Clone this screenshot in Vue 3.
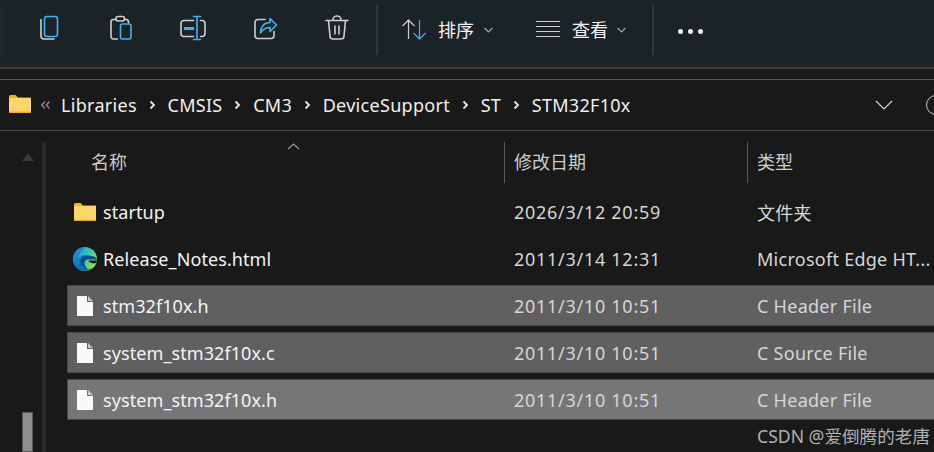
<script setup>
const crumbs = ['Libraries', 'CMSIS', 'CM3', 'DeviceSupport', 'ST', 'STM32F10x']

const rows = [
  { name: 'startup', date: '2026/3/12 20:59', type: '文件夹', icon: 'folder' },
  { name: 'Release_Notes.html', date: '2011/3/14 12:31', type: 'Microsoft Edge HT...', icon: 'edge' },
  { name: 'stm32f10x.h', date: '2011/3/10 10:51', type: 'C Header File', icon: 'file', state: 'selected' },
  { name: 'system_stm32f10x.c', date: '2011/3/10 10:51', type: 'C Source File', icon: 'file', state: 'selected' },
  { name: 'system_stm32f10x.h', date: '2011/3/10 10:51', type: 'C Header File', icon: 'file', state: 'hover' }
]
</script>

<template>
  <div class="window">
    <div class="toolbar">
      <div class="edge-block"></div>

      <button class="tool">
        <svg width="30" height="30" viewBox="0 0 30 30" fill="none">
          <path class="gray" d="M7 6.500V23a3 3 0 0 0 3 3h10" />
          <rect class="blue" x="10.500" y="3.500" width="13" height="20" rx="2.500" />
        </svg>
      </button>
      <button class="tool">
        <svg width="30" height="30" viewBox="0 0 30 30" fill="none">
          <path class="gray" d="M9.500 6.500H7.500a2.500 2.500 0 0 0-2.500 2.500v14.500a2.500 2.500 0 0 0 2.500 2.500h4M18.500 6.500h1.500a2.500 2.500 0 0 1 2.500 2.500v1" />
          <rect class="gray" x="10" y="3.500" width="8.500" height="4.500" rx="2" />
          <rect class="blue" x="14.500" y="11" width="10.500" height="15" rx="2" />
        </svg>
      </button>
      <button class="tool">
        <svg width="30" height="30" viewBox="0 0 30 30" fill="none">
          <path class="gray" d="M15.500 7.500H6a3 3 0 0 0-3 3v10a3 3 0 0 0 3 3h9.500M22.500 7.500H24a3 3 0 0 1 3 3v10a3 3 0 0 1-3 3h-1.500" />
          <path class="blue" d="M19 3.500v23M15.500 3.500h7M15.500 26.500h7" />
          <path class="blue thick" d="M6 15.500h10" />
        </svg>
      </button>
      <button class="tool">
        <svg width="30" height="30" viewBox="0 0 30 30" fill="none">
          <path class="gray" d="M15 6.500H8a3 3 0 0 0-3 3v13a3 3 0 0 0 3 3h13a3 3 0 0 0 3-3v-4" />
          <path class="blue" d="M20 5.500 26.500 12 20 18.500v-4c-4 0-7 1.500-9.500 5.500 0-6 3.500-10.500 9.500-10.500z" />
        </svg>
      </button>
      <button class="tool">
        <svg width="30" height="30" viewBox="0 0 30 30" fill="none">
          <path class="gray" d="M4 7.500h22M11 7a4 4 0 0 1 8 0M6.500 7.500 8 23a3 3 0 0 0 3 3h8a3 3 0 0 0 3-3l1.500-15.500M13 13v8M17 13v8" />
        </svg>
      </button>

      <div class="divider first"></div>

      <button class="menu sort">
        <svg width="26" height="24" viewBox="0 0 26 24" fill="none">
          <path class="gray thin" d="M7.500 2v19M1.500 8l6-6 6 6" />
          <path class="blue thin" d="M18.500 2v19M12.500 15l6 6 6-6" />
        </svg>
        <span class="menu-label">排序</span>
        <svg class="caret" width="9" height="6" viewBox="0 0 9 6" fill="none">
          <path d="M.5 1 4.500 5l4-4" />
        </svg>
      </button>
      <button class="menu view">
        <svg width="24" height="24" viewBox="0 0 24 24" fill="none">
          <path class="gray thin" d="M0 3.500h24M0 8.500h24M0 13.500h24M0 18.500h24" />
        </svg>
        <span class="menu-label">查看</span>
        <svg class="caret" width="9" height="6" viewBox="0 0 9 6" fill="none">
          <path d="M.5 1 4.500 5l4-4" />
        </svg>
      </button>

      <div class="divider"></div>

      <div class="dots"><i></i><i></i><i></i></div>
    </div>

    <div class="address">
      <svg class="addr-folder" width="22" height="18" viewBox="0 0 22 18">
        <path fill="#f5b01f" d="M0 1.500A1.500 1.500 0 0 1 1.500 0h5L9 2.500h13V6H0z" />
        <rect y="3" width="22" height="15" rx="1" fill="#ffd66b" />
        <rect y="16.500" width="22" height="1.500" fill="#eab030" />
      </svg>
      <svg class="addr-more" width="9" height="8" viewBox="0 0 9 8" fill="none">
        <path d="M4 .5 .8 4 4 7.500M8.500 .5 5.300 4l3.200 3.500" />
      </svg>
      <div class="crumbs">
        <template v-for="(crumb, index) in crumbs" :key="crumb">
          <svg v-if="index > 0" class="crumb-sep" width="7" height="10" viewBox="0 0 7 10" fill="none">
            <path d="M1.500 1.500 5 5 1.500 8.500" />
          </svg>
          <span>{{ crumb }}</span>
        </template>
      </div>
      <svg class="addr-down" width="18" height="10" viewBox="0 0 18 10" fill="none">
        <path d="M1 1l8 8 8-8" />
      </svg>
      <div class="addr-search"></div>
    </div>

    <div class="content">
      <div class="gutter">
        <div class="scroll-track">
          <div class="scroll-up"></div>
          <div class="scroll-thumb"></div>
        </div>
      </div>

      <div class="list">
        <div class="head">
          <div class="head-cell name">
            名称
            <svg class="sort-mark" width="13" height="7" viewBox="0 0 13 7" fill="none">
              <path d="M1 6l5.500-5L12 6" />
            </svg>
          </div>
          <div class="head-cell">修改日期</div>
          <div class="head-cell">类型</div>
        </div>

        <div class="rows">
          <div v-for="row in rows" :key="row.name" class="row" :class="row.state">
            <div class="row-icon">
              <svg v-if="row.icon === 'folder'" width="22" height="18" viewBox="0 0 22 18">
                <path fill="#f5b01f" d="M0 1.500A1.500 1.500 0 0 1 1.500 0h5L9 2.500h13V6H0z" />
                <rect y="3" width="22" height="15" rx="1" fill="#ffd66b" />
                <rect y="16.500" width="22" height="1.500" fill="#eab030" />
              </svg>
              <svg v-else-if="row.icon === 'edge'" width="24" height="24" viewBox="0 0 24 24">
                <defs>
                  <linearGradient id="edgeTop" x1="0.200" y1="0" x2="1" y2="0.500">
                    <stop offset="0" stop-color="#1f9fd8" />
                    <stop offset="0.500" stop-color="#30c0b8" />
                    <stop offset="1" stop-color="#86e05a" />
                  </linearGradient>
                  <linearGradient id="edgeBlue" x1="0" y1="0" x2="0.600" y2="1">
                    <stop offset="0" stop-color="#1c98dc" />
                    <stop offset="1" stop-color="#0b66b4" />
                  </linearGradient>
                </defs>
                <circle cx="12" cy="12" r="12" fill="url(#edgeTop)" />
                <path fill="url(#edgeBlue)" d="M12 0C5 0 0 5.500 0 12c0 6.500 5.500 12 12 12 3 0 5.500-1 7.500-2.500-3 1-8.500 .5-10.500-3.500-2-4 .5-9 5-9.500-1.500-1-6.500-1-8.500 3C6 6 9 3 12 0z" />
                <path fill="#0d4c8e" d="M14 8.500c-4.500 0-7 3.500-6.500 7 .5 4 5 7 12 6-4 1-7.500-1-8-4.500-.3-2.500 1-4.500 3.500-4.500h9c0-2-4-4-10-4z" />
                <path fill="#161a1c" d="M24 13.600H16.300c-.5 0-.8.6-.4 1 1.400 1.500 5 2.500 7 1.500.6-.8 1-1.600 1.100-2.500z" />
              </svg>
              <svg v-else width="16" height="20" viewBox="0 0 16 20">
                <path fill="#fafafa" d="M0 0h10v6h6v14H0z" />
                <path fill="#c9c9c9" d="M11 0l5 5h-5z" />
              </svg>
            </div>
            <div class="row-name">{{ row.name }}</div>
            <div class="row-text date">{{ row.date }}</div>
            <div class="row-text type">{{ row.type }}</div>
          </div>
        </div>
      </div>
    </div>

    <div class="watermark">CSDN @爱倒腾的老唐</div>
  </div>
</template>

<style scoped>
  .window {
    position: relative;
    width: 934px;
    height: 452px;
    overflow: hidden;
    background: #191919;
    color: #e6e6e6;
    font-family: "Noto Sans", "Noto Sans CJK SC", sans-serif;
    font-size: 18px;
  }

  .toolbar {
    display: flex;
    align-items: center;
    box-sizing: border-box;
    height: 69px;
    padding: 5px 0 12px;
    background: #1c2327;
    border-bottom: 2px solid #3c3c3c;
  }

  .edge-block {
    align-self: stretch;
    width: 4px;
    margin-right: 9px;
    background: #20272b;
    border-radius: 0 5px 5px 0;
  }

  .tool {
    display: flex;
    justify-content: center;
    width: 72px;
    margin-bottom: 4px;
    padding: 0;
    border: none;
    background: none;
  }

  svg {
    display: block;
    flex: none;
  }

  .gray {
    stroke: #cfcfcf;
    stroke-width: 1.6;
    stroke-linecap: round;
    stroke-linejoin: round;
  }

  .blue {
    stroke: #3fb2f0;
    stroke-width: 1.6;
    stroke-linecap: round;
    stroke-linejoin: round;
  }

  .thick {
    stroke-width: 3;
    stroke-linecap: butt;
  }

  .thin {
    stroke-width: 1.2;
    stroke-linecap: butt;
  }

  .divider {
    align-self: stretch;
    width: 2px;
    background: #32393d;
  }

  .divider.first {
    margin-left: 3px;
  }

  .menu {
    display: flex;
    align-items: center;
    padding: 0;
    border: none;
    background: none;
    color: #f2f2f2;
    font: inherit;
  }

  .sort {
    margin-left: 23px;
  }

  .view {
    margin: 0 26px 0 43px;
  }

  .menu-label {
    margin: 0 10px 0 11px;
    font-size: 18px;
    line-height: 24px;
  }

  .view .menu-label {
    margin: 0 9px 0 12px;
  }

  .caret path {
    stroke: #a8a8a8;
    stroke-width: 1.1;
  }

  .dots {
    display: flex;
    gap: 5px;
    margin: 2px 0 0 24px;
  }

  .dots i {
    width: 5px;
    height: 5px;
    border-radius: 50%;
    background: #f0f0f0;
  }

  .address {
    display: flex;
    align-items: center;
    box-sizing: border-box;
    height: 52px;
    margin-top: 10px;
    padding-left: 9px;
    border-top: 1px solid #5a5a5a;
    border-bottom: 1px solid #4a4a4a;
  }

  .addr-folder {
    margin-top: -2px;
  }

  .addr-more {
    margin: 0 0 0 10px;
  }

  .addr-more path {
    stroke: #8c8c8c;
    stroke-width: 1.4;
  }

  .crumbs {
    display: flex;
    align-items: center;
    gap: 11.8px;
    margin-left: 11px;
    flex: 1;
    color: #f0f0f0;
    line-height: 24px;
  }

  .crumbs span {
    letter-spacing: .3px;
  }

  .crumb-sep path {
    stroke: #e8e8e8;
    stroke-width: 1.8;
  }

  .addr-down path {
    stroke: #d4d4d4;
    stroke-width: 1.2;
  }

  .addr-search {
    flex: none;
    box-sizing: border-box;
    width: 20px;
    height: 20px;
    margin: 0 -12px 0 33px;
    border: 1.5px solid #cfcfcf;
    border-radius: 50%;
  }

  .content {
    display: flex;
    padding-top: 11px;
  }

  .gutter {
    flex: none;
    width: 67px;
    box-sizing: border-box;
    padding-left: 22px;
  }

  .scroll-track {
    display: flex;
    flex-direction: column;
    justify-content: space-between;
    box-sizing: border-box;
    width: 24px;
    height: 310px;
    padding-top: 11px;
    border-right: 4px solid #2a2a2a;
  }

  .scroll-up {
    width: 0;
    height: 0;
    border-left: 6px solid transparent;
    border-right: 6px solid transparent;
    border-bottom: 8px solid #3a3a3a;
  }

  .scroll-thumb {
    width: 11px;
    height: 40px;
    background: #8e8e8e;
    border: 1px solid #5a5a5a;
    box-sizing: border-box;
  }

  .list {
    flex: 1;
    min-width: 0;
  }

  .head {
    display: grid;
    grid-template-columns: 437px 243px 1fr;
    height: 40px;
    color: #cdcdcd;
    line-height: 41px;
  }

  .head-cell {
    display: flex;
    align-items: flex-start;
    padding-left: 9px;
    border-left: 1px solid #5a5a5a;
  }

  .head-cell.name {
    position: relative;
    padding-left: 24px;
    border-left: none;
  }

  .sort-mark {
    position: absolute;
    left: 220px;
    top: 1px;
  }

  .sort-mark path {
    stroke: #9a9a9a;
    stroke-width: 1.1;
  }

  .rows {
    display: flex;
    flex-direction: column;
    gap: 6px;
    margin-top: 9px;
  }

  .row {
    display: grid;
    grid-template-columns: 30px 411px 243px 1fr;
    align-items: center;
    box-sizing: border-box;
    height: 41px;
    padding-left: 5px;
    border: 1px solid transparent;
    border-right: none;
  }

  .row.selected {
    background: #606060;
    border-color: #484848;
  }

  .row.hover {
    background: #767676;
    border-color: #484848;
  }

  .row-icon {
    display: flex;
    justify-content: center;
    width: 24px;
  }

  .row-name {
    color: #f4f4f4;
    letter-spacing: .08px;
  }

  .row-text {
    color: #d6d6d6;
    white-space: nowrap;
  }

  .date {
    letter-spacing: .72px;
  }

  .type {
    letter-spacing: .27px;
  }

  .watermark {
    position: absolute;
    right: 4px;
    bottom: 5px;
    color: #b0b0b0;
    font-size: 17.6px;
    line-height: 22px;
  }
</style>
